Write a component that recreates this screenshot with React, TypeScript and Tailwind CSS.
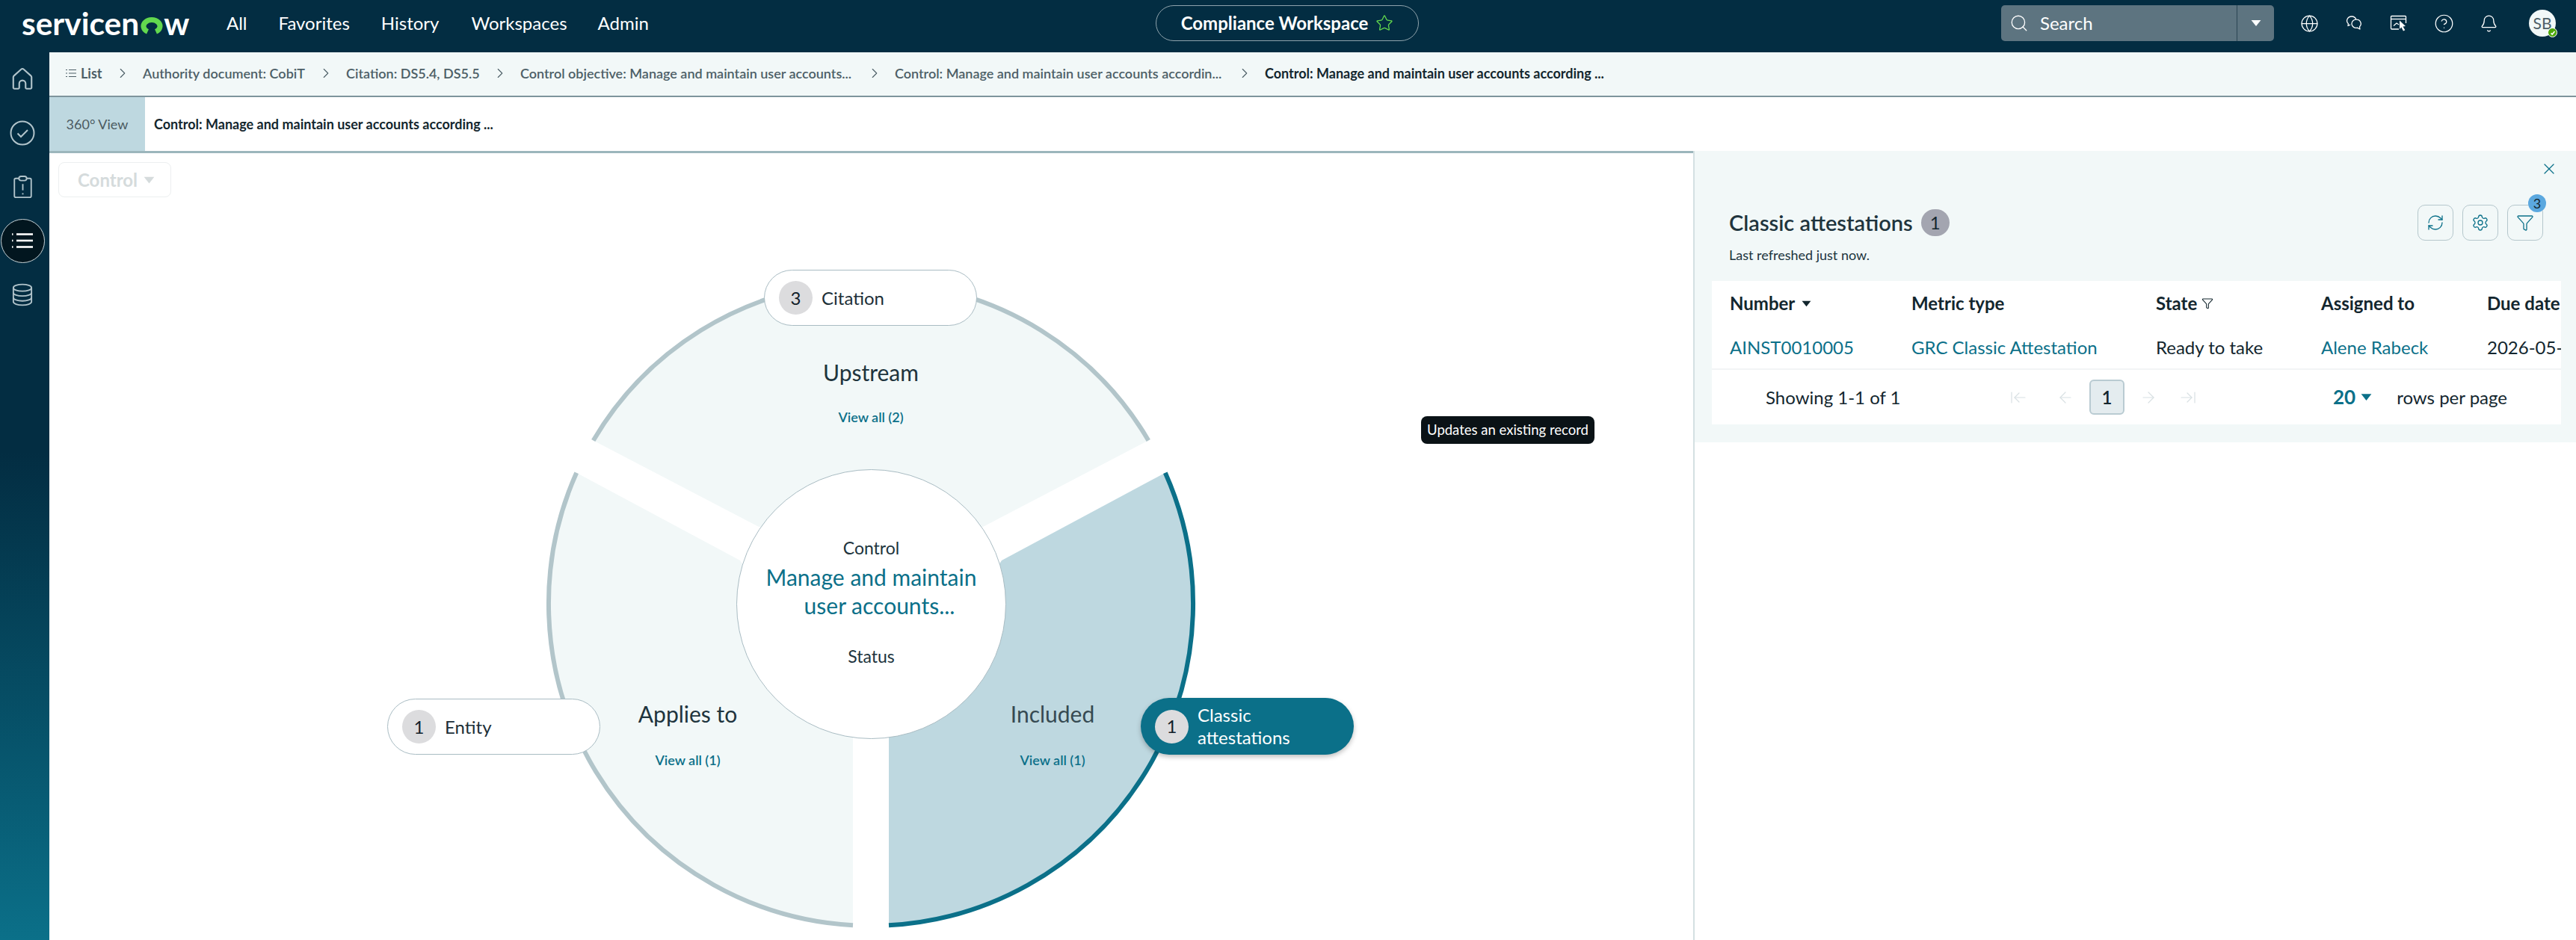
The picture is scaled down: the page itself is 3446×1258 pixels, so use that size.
import {
  ArrowLeft,
  ArrowLeftToLine,
  ArrowRight,
  ArrowRightToLine,
  Bell,
  ChevronRight,
  CircleHelp,
  Funnel,
  Globe,
  RefreshCw,
  Search,
  Settings,
  Star,
  X,
} from "lucide-react";

const navItems = [
  { label: "All", className: "ml-[50px]" },
  { label: "Favorites", className: "ml-[42px]" },
  { label: "History", className: "ml-[42px]" },
  { label: "Workspaces", className: "ml-[43px]" },
  { label: "Admin", className: "ml-[41px]" },
];

const crumbs = [
  { label: "Authority document: CobiT", className: "w-[218px]" },
  { label: "Citation: DS5.4, DS5.5", className: "w-[179px]" },
  { label: "Control objective: Manage and maintain user accounts...", className: "w-[447px]" },
  { label: "Control: Manage and maintain user accounts accordin...", className: "w-[441px]" },
];

function Caret({ className }: { className?: string }) {
  return (
    <svg viewBox="0 0 12 8" className={className} fill="currentColor">
      <path d="M0.5 0.5h11L6 7.5z" />
    </svg>
  );
}

function Logo() {
  return (
    <div className="ml-[29px] flex h-[44px] w-[224px] items-center text-[42.5px] leading-none font-bold whitespace-nowrap text-white">
      <span>servicen</span>
      <svg viewBox="0 0 30 24" className="mt-[7px] ml-[2px] h-[24px] w-[30px] shrink-0">
        <path d="M9.500 19.400A11 8.500 0 1 1 20.500 19.400" fill="none" stroke="#62d84e" strokeWidth="7" />
      </svg>
      <span className="ml-[1px]">w</span>
    </div>
  );
}

function ChatIcon() {
  return (
    <svg viewBox="0 0 22 20" className="h-[20px] w-[22px]" fill="none" stroke="currentColor" strokeWidth="1.3">
      <path d="M8 1a6.500 5.800 0 0 0-4.600 9.800L3 13.500l3-1.300" strokeLinejoin="round" />
      <path d="M8 1a6.200 5.800 0 0 1 5.800 4" />
      <path d="M14.500 5.200a5.800 5.600 0 0 1 4 9.600l.4 3.200-3.400-1.900a5.800 5.600 0 1 1-1-10.900z" strokeLinejoin="round" />
    </svg>
  );
}

function CursorWindowIcon() {
  return (
    <svg viewBox="0 0 24 24" className="h-[24px] w-[24px]" fill="none" stroke="currentColor" strokeWidth="1.3">
      <path d="M12 20H2.500A1 1 0 0 1 1.500 19V3.500A1 1 0 0 1 2.500 2.500h18a1 1 0 0 1 1 1V12" />
      <path d="M1.500 6.500h20" />
      <path d="M5 15.500l4-3.500 3 2" />
      <path d="M13 8.500l8 7.500-3.500.5 2.800 4.800-2.300 1.200-2.700-5-2.300 2.500z" fill="white" stroke="none" />
    </svg>
  );
}

function TopIcons() {
  return (
    <div className="flex items-center text-white">
      <span className="flex w-[60px] justify-center"><Globe size={25} strokeWidth={1.2} /></span>
      <span className="flex w-[60px] justify-center"><ChatIcon /></span>
      <span className="flex w-[60px] justify-center"><CursorWindowIcon /></span>
      <span className="flex w-[60px] justify-center"><CircleHelp size={27} strokeWidth={1.1} /></span>
      <span className="flex w-[60px] justify-center"><Bell size={25} strokeWidth={1.2} /></span>
      <div className="relative mr-[27px] ml-[24px] flex size-[36px] items-center justify-center rounded-full bg-[#f2f8f8] text-[21px] text-[#4d5f67]">
        SB
        <div className="absolute right-[-2px] bottom-[-1px] flex size-[13px] items-center justify-center rounded-full border border-white bg-[#4ca80a]">
          <svg viewBox="0 0 10 10" className="size-[8px]" fill="none" stroke="white" strokeWidth="2">
            <path d="M2 5.500l2 2 4-5" />
          </svg>
        </div>
      </div>
    </div>
  );
}

function Header() {
  return (
    <header className="flex h-[70px] shrink-0 items-center bg-[#032d42] pb-[8px] text-white">
      <div className="flex w-[1546px] items-center">
        <Logo />
        {navItems.map((item) => (
          <span key={item.label} className={`text-[24px] ${item.className}`}>
            {item.label}
          </span>
        ))}
      </div>
      <div className="flex h-[48px] w-[352px] items-center justify-center gap-[10px] rounded-full border border-[#8fa3ac] text-[24px] font-bold">
        Compliance Workspace
        <Star size={24} strokeWidth={1.3} className="text-[#62d84e]" />
      </div>
      <div className="flex flex-1 items-center justify-end">
        <div className="flex h-[48px] w-[365px] items-center rounded-[5px] bg-[#5d7480]">
          <Search size={26} strokeWidth={1.2} className="ml-[11px]" />
          <span className="ml-[15px] flex-1 text-[24px]">Search</span>
          <div className="flex h-full w-[50px] items-center justify-center border-l border-[#2b4654]">
            <Caret className="h-[10px] w-[14px] text-white" />
          </div>
        </div>
        <div className="ml-[17px]">
          <TopIcons />
        </div>
      </div>
    </header>
  );
}

function HomeIcon() {
  return (
    <svg viewBox="0 0 32 32" className="size-[34px]" fill="none" stroke="currentColor" strokeWidth="2">
      <path d="M6 28h4.500a1.500 1.500 0 0 0 1.500-1.500v-5a4 4 0 0 1 8 0v5a1.500 1.500 0 0 0 1.500 1.500H26a1.500 1.500 0 0 0 1.500-1.500V13.500a2.500 2.500 0 0 0-.9-1.900L17.600 3.500a2.500 2.500 0 0 0-3.200 0L5.400 11.600a2.500 2.500 0 0 0-.9 1.900v13A1.500 1.500 0 0 0 6 28z" />
    </svg>
  );
}

function CheckIcon() {
  return (
    <svg viewBox="0 0 34 34" className="size-[34px]" fill="none" stroke="currentColor" strokeWidth="2">
      <circle cx="17" cy="17" r="15.500" />
      <path d="M10.500 17.500l4.500 4.500 9-9" />
    </svg>
  );
}

function ClipboardIcon() {
  return (
    <svg viewBox="0 0 26 32" className="h-[30px] w-[25px]" fill="none" stroke="currentColor" strokeWidth="2">
      <path d="M8 4H3a2 2 0 0 0-2 2v23a2 2 0 0 0 2 2h20a2 2 0 0 0 2-2V6a2 2 0 0 0-2-2h-5" />
      <rect x="7.500" y="1" width="11" height="6" rx="3" />
      <path d="M13 12v9" />
      <path d="M13 25v2" />
    </svg>
  );
}

function ListIcon() {
  return (
    <svg viewBox="0 0 30 22" className="h-[22px] w-[30px]" fill="none" stroke="white" strokeWidth="2.600">
      <path d="M7 2.500h22" />
      <path d="M7 11h22" />
      <path d="M7 19.500h22" />
      <path d="M1 2.500h1.500" />
      <path d="M1 11h1.500" />
      <path d="M1 19.500h1.500" />
    </svg>
  );
}

function DatabaseIcon() {
  return (
    <svg viewBox="0 0 30 32" className="h-[31px] w-[28px]" fill="none" stroke="currentColor" strokeWidth="2">
      <ellipse cx="15" cy="6" rx="13" ry="4.800" />
      <path d="M2 6v20c0 2.700 5.800 4.800 13 4.800s13-2.100 13-4.800V6" />
      <path d="M2 13c0 2.700 5.800 4.800 13 4.800S28 15.700 28 13" />
      <path d="M2 20c0 2.700 5.800 4.800 13 4.800S28 22.700 28 20" />
    </svg>
  );
}

function Sidebar() {
  return (
    <aside className="flex w-[66px] shrink-0 flex-col bg-linear-to-b from-[#032d42] from-45% to-[#0b7089] text-[#b2c4cb]">
      <div className="flex h-[72px] w-[60px] items-center justify-center"><HomeIcon /></div>
      <div className="flex h-[72px] w-[60px] items-center justify-center"><CheckIcon /></div>
      <div className="flex h-[72px] w-[60px] items-center justify-center"><ClipboardIcon /></div>
      <div className="flex h-[72px] w-[60px] items-center justify-center">
        <div className="flex size-[59px] items-center justify-center rounded-full border border-[#c9d4d8] bg-[#02161f]">
          <ListIcon />
        </div>
      </div>
      <div className="flex h-[72px] w-[60px] items-center justify-center"><DatabaseIcon /></div>
    </aside>
  );
}

function Breadcrumbs() {
  return (
    <div className="flex h-[60px] shrink-0 items-center border-b-2 border-[#7e949c] bg-[#f2f8f8] pb-[2px] pl-[22px] text-[18px] font-semibold text-[#4d5f67]">
      <svg viewBox="0 0 14 12" className="h-[12px] w-[14px]" fill="none" stroke="currentColor" strokeWidth="1">
        <path d="M4 1.500h10" />
        <path d="M4 6h10" />
        <path d="M4 10.500h10" />
        <path d="M0 1.500h2" />
        <path d="M0 6h2" />
        <path d="M0 10.500h2" />
      </svg>
      <span className="ml-[6px] w-[29px] font-bold">List</span>
      {crumbs.map((crumb) => (
        <div key={crumb.label} className="flex items-center">
          <ChevronRight size={22} strokeWidth={1.2} className="mx-[16px]" />
          <span className={`whitespace-nowrap ${crumb.className}`}>{crumb.label}</span>
        </div>
      ))}
      <ChevronRight size={22} strokeWidth={1.2} className="mx-[16px]" />
      <span className="font-bold whitespace-nowrap text-[#13262e]">
        Control: Manage and maintain user accounts according ...
      </span>
    </div>
  );
}

function Pill({
  count,
  label,
  className,
}: {
  count: number;
  label: string;
  className: string;
}) {
  return (
    <div
      className={`absolute flex h-[75px] w-[285px] items-center gap-[12px] rounded-full border border-[#a9bcc3] bg-white pl-[19px] text-[24px] text-[#1d2f38] ${className}`}
    >
      <div className="flex size-[45px] shrink-0 items-center justify-center rounded-full bg-[#dcdcde] text-[24px] text-[#11202a]">
        {count}
      </div>
      {label}
    </div>
  );
}

function Sector({
  title,
  count,
  className,
  gapClass,
  dark,
}: {
  title: string;
  count: number;
  className: string;
  gapClass: string;
  dark?: boolean;
}) {
  return (
    <div className={`absolute flex w-[240px] flex-col items-center ${className}`}>
      <div className={`text-[30px] leading-[40px] ${dark ? "text-[#364a52]" : "text-[#20343d]"}`}>{title}</div>
      <div className={`text-[18px] leading-[24px] font-semibold text-[#0b7089] ${gapClass}`}>View all ({count})</div>
    </div>
  );
}

function Canvas() {
  return (
    <div className="relative flex-1 overflow-hidden border-t-[3px] border-[#9cb6bc] bg-white">
      <svg viewBox="66 205 2199 1053" className="absolute top-0 left-0 h-[1053px] w-[2199px]">
        <path d="M1015 705L793.700 589.400A431 431 0 0 1 1536.300 589.400L1315 705Z" fill="#f2f8f8" />
        <path d="M990 750L771.200 632.700A431 431 0 0 0 1141 1238.300L1141 980Z" fill="#f2f8f8" />
        <path d="M1340 750L1558.800 632.700A431 431 0 0 1 1189 1238.300L1189 980Z" fill="#bed8e0" />
        <path d="M793.700 589.400A431 431 0 0 1 1536.300 589.400" fill="none" stroke="#b2c5ca" strokeWidth="6" />
        <path d="M771.200 632.700A431 431 0 0 0 1141 1238.300" fill="none" stroke="#b2c5ca" strokeWidth="6" />
        <path d="M1558.800 632.700A431 431 0 0 1 1189 1238.300" fill="none" stroke="#0b7089" strokeWidth="6" />
      </svg>

      <div className="absolute top-[12px] left-[12px] flex h-[47px] w-[151px] items-center gap-[8px] rounded-[8px] border border-[#eceff0] pl-[25px] text-[24px] font-bold text-[#d5dbdc]">
        Control
        <Caret className="h-[10px] w-[15px]" />
      </div>

      <Sector title="Upstream" count={2} className="top-[273px] left-[979px]" gapClass="mt-[28px]" />
      <Sector title="Applies to" count={1} className="top-[730px] left-[734px]" gapClass="mt-[30px]" />
      <Sector title="Included" count={1} className="top-[730px] left-[1222px]" gapClass="mt-[30px]" dark />

      <div className="absolute top-[423px] left-[919px] flex size-[361px] flex-col items-center rounded-full border border-[#a9bcc3] bg-white pt-[89px] text-[#20343d]">
        <div className="text-[23px] leading-[30px]">Control</div>
        <div className="mt-[5px] text-center text-[30px] leading-[38px] text-[#0b7089]">
          Manage and maintain
          <br />
          <span className="ml-[22px]">user accounts...</span>
        </div>
        <div className="mt-[34px] text-[23px] leading-[30px]">Status</div>
      </div>

      <Pill count={3} label="Citation" className="top-[156px] left-[956px]" />
      <Pill count={1} label="Entity" className="top-[730px] left-[452px]" />
      <div className="absolute top-[729px] left-[1460px] flex h-[76px] w-[285px] items-center gap-[12px] rounded-full bg-[#0b7089] pl-[19px] text-[24px] leading-[30px] text-white shadow-[0_3px_6px_rgba(0,0,0,0.25)]">
        <div className="flex size-[45px] shrink-0 items-center justify-center rounded-full bg-[#dcdcde] text-[24px] text-[#11202a]">
          1
        </div>
        <div>
          Classic
          <br />
          attestations
        </div>
      </div>

      <div className="absolute top-[352px] left-[1835px] flex h-[37px] w-[232px] items-center justify-center rounded-[8px] bg-[#0a1216] text-[18.5px] whitespace-nowrap text-white">
        Updates an existing record
      </div>
    </div>
  );
}

function IconButton({ children }: { children: React.ReactNode }) {
  return (
    <div className="relative flex size-[48px] items-center justify-center rounded-[10px] border border-[#b5c7cc] text-[#0b7089]">
      {children}
    </div>
  );
}

function AttestationTable() {
  return (
    <div className="mr-[20px] ml-[23px] overflow-hidden bg-white text-[24px] text-[#13262e]">
      <div className="grid h-[60px] grid-cols-[243px_327px_221px_222px_1fr] items-center pl-[24px] font-bold">
        <div className="flex items-center gap-[9px]">
          Number
          <Caret className="h-[9px] w-[13px]" />
        </div>
        <div>Metric type</div>
        <div className="flex items-center gap-[6px]">
          State
          <Funnel size={16} strokeWidth={1.6} />
        </div>
        <div>Assigned to</div>
        <div className="whitespace-nowrap">Due date</div>
      </div>
      <div className="grid h-[59px] grid-cols-[243px_327px_221px_222px_1fr] items-center border-b-2 border-[#f2f4f5] pl-[24px]">
        <div className="text-[#0b7089]">AINST0010005</div>
        <div className="text-[#0b7089]">GRC Classic Attestation</div>
        <div>Ready to take</div>
        <div className="text-[#0b7089]">Alene Rabeck</div>
        <div className="whitespace-nowrap">2026-05-</div>
      </div>
      <div className="flex h-[73px] items-center pl-[72px]">
        <span className="w-[326px]">Showing 1-1 of 1</span>
        <div className="flex items-center text-[#d8e0e3]">
          <ArrowLeftToLine size={24} strokeWidth={1.2} />
          <ArrowLeft size={24} strokeWidth={1.2} className="ml-[39px]" />
          <div className="mx-[20px] flex h-[47px] w-[47px] items-center justify-center rounded-[6px] border-2 border-[#b9cbd2] bg-[#e4ecef] font-semibold text-[#13262e]">
            1
          </div>
          <ArrowRight size={24} strokeWidth={1.2} />
          <ArrowRightToLine size={24} strokeWidth={1.2} className="ml-[29px]" />
        </div>
        <span className="ml-[182px] flex items-center gap-[7px] text-[26px] font-bold text-[#0b7089]">
          20
          <Caret className="h-[11px] w-[15px]" />
        </span>
        <span className="ml-[33px]">rows per page</span>
      </div>
    </div>
  );
}

function SidePanel() {
  return (
    <section className="w-[1181px] shrink-0 border-l-2 border-[#d4e0e2] bg-white">
      <div className="bg-[#f2f8f8] pb-[24px]">
        <div className="flex justify-end pt-[12px] pr-[24px] text-[#0b7089]">
          <X size={24} strokeWidth={1.2} />
        </div>
        <div className="mt-[36px] flex items-center justify-between pr-[44px] pl-[46px]">
          <div className="flex items-center gap-[11px] text-[29px] font-semibold text-[#20343d]">
            Classic attestations
            <div className="flex h-[36px] w-[38px] items-center justify-center rounded-full bg-[#a3a5b0] text-[24px] font-normal text-[#13262e]">
              1
            </div>
          </div>
          <div className="flex gap-[12px]">
            <IconButton><RefreshCw size={24} strokeWidth={1.3} /></IconButton>
            <IconButton><Settings size={24} strokeWidth={1.3} /></IconButton>
            <IconButton>
              <Funnel size={24} strokeWidth={1.3} />
              <div className="absolute top-[-15px] right-[-5px] flex size-[24px] items-center justify-center rounded-full bg-[#5ba8df] text-[18px] text-[#13262e]">
                3
              </div>
            </IconButton>
          </div>
        </div>
        <div className="mt-[7px] mb-[23px] pl-[46px] text-[18px] leading-[24px] text-[#20343d]">
          Last refreshed just now.
        </div>
        <AttestationTable />
      </div>
    </section>
  );
}

export default function App() {
  return (
    <div className="flex h-[1258px] w-[3446px] flex-col overflow-hidden bg-white [font-family:Lato,sans-serif]">
      <Header />
      <div className="flex min-h-0 flex-1">
        <Sidebar />
        <main className="flex min-w-0 flex-1 flex-col">
          <Breadcrumbs />
          <div className="flex h-[72px] shrink-0 items-center">
            <div className="flex h-full w-[128px] items-center justify-center bg-[#bed8e0] text-[18px] text-[#4b5a60]">
              360° View
            </div>
            <span className="ml-[12px] text-[18px] font-bold text-[#13262e]">
              Control: Manage and maintain user accounts according ...
            </span>
          </div>
          <div className="flex min-h-0 flex-1">
            <Canvas />
            <SidePanel />
          </div>
        </main>
      </div>
    </div>
  );
}
